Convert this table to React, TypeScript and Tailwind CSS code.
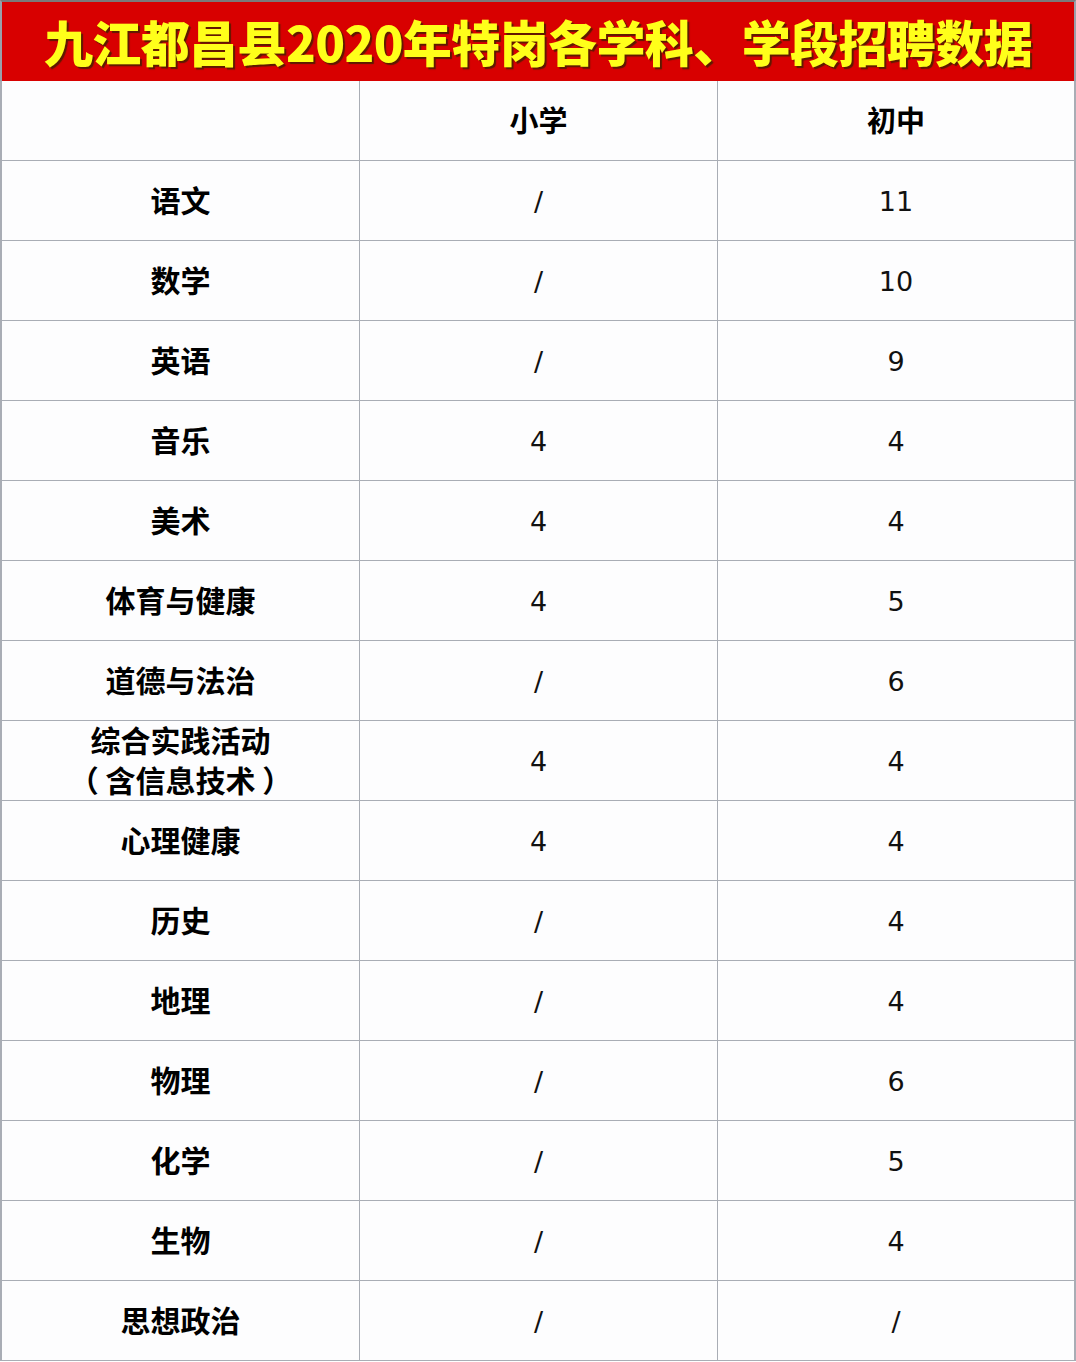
const rows: [string, string, string][] = [
  ['语文', '/', '11'],
  ['数学', '/', '10'],
  ['英语', '/', '9'],
  ['音乐', '4', '4'],
  ['美术', '4', '4'],
  ['体育与健康', '4', '5'],
  ['道德与法治', '/', '6'],
  ['综合实践活动\n（ 含信息技术 ）', '4', '4'],
  ['心理健康', '4', '4'],
  ['历史', '/', '4'],
  ['地理', '/', '4'],
  ['物理', '/', '6'],
  ['化学', '/', '5'],
  ['生物', '/', '4'],
  ['思想政治', '/', '/'],
];

const cjk = "font-['Noto_Sans_CJK_SC',sans-serif]";
const num = "font-['DejaVu_Sans','Noto_Sans_CJK_SC',sans-serif]";

export default function App() {
  return (
    <div className="w-[1076px] bg-white">
      <div className="flex h-[81px] items-center justify-center border-t-2 border-l-2 border-r-2 border-t-[#7a7a7a] border-l-[#9aa0aa] border-r-[#9aa0aa] bg-[#d80000] pb-[3px]">
        <h1
          className={`${cjk} text-[49px] font-black leading-none tracking-[-0.6px] text-[#ffff1a] [text-shadow:2px_2px_1px_#5c1a00]`}
        >
          九江都昌县2020年特岗各学科、学段招聘数据
        </h1>
      </div>
      <div className="grid grid-cols-[358px_358px_358px] border-l-2 border-[#a9adb5] bg-[#fdfdfe]">
        <div className="h-[80px] border-r border-b border-[#a9adb5]" />
        <div className={`${cjk} flex h-[80px] items-center justify-center border-r border-b border-[#a9adb5] pb-[2px] text-[29px] font-bold text-black`}>
          小学
        </div>
        <div className={`${cjk} flex h-[80px] items-center justify-center border-r-2 border-b border-[#a9adb5] pb-[2px] text-[29px] font-bold text-black`}>
          初中
        </div>
        {rows.map(([name, a, b], i) => (
          <div key={i} className="contents">
            <div
              className={`${cjk} flex h-[80px] items-center justify-center whitespace-pre border-r border-b border-[#a9adb5] pb-[3px] text-center text-[30px] font-bold leading-[40px] text-black`}
            >
              {name}
            </div>
            <div className={`${num} flex h-[80px] items-center justify-center border-r border-b border-[#a9adb5] pt-1 text-[27px] text-[#111]`}>
              {a}
            </div>
            <div className={`${num} flex h-[80px] items-center justify-center border-r-2 border-b border-[#a9adb5] pt-1 text-[27px] text-[#111]`}>
              {b}
            </div>
          </div>
        ))}
      </div>
    </div>
  );
}
